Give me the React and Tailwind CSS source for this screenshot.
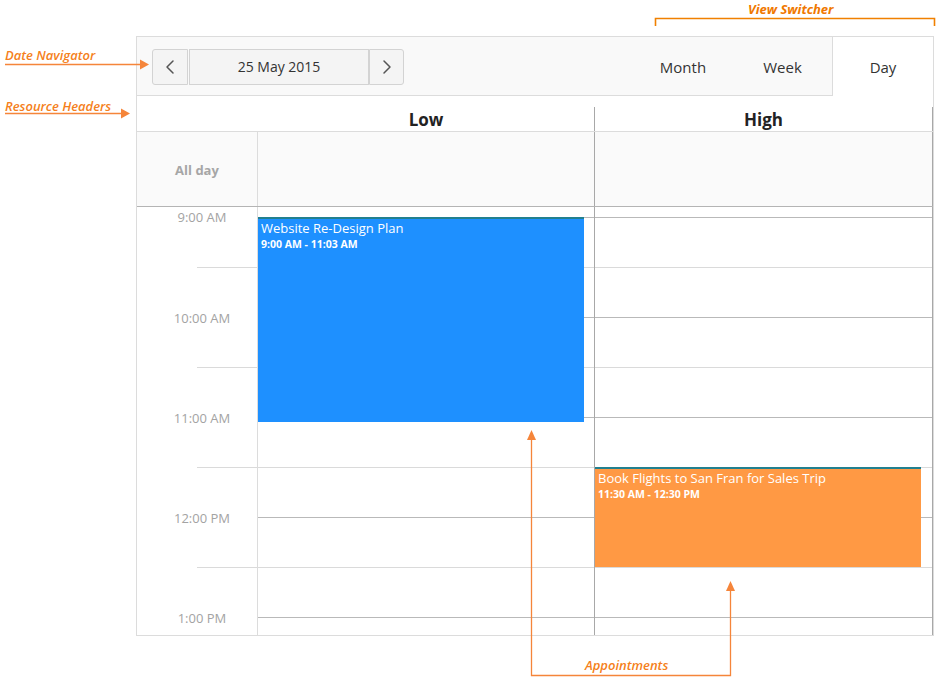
import React from 'react';
import { ChevronLeft, ChevronRight } from 'lucide-react';

const hours = [
  { label: '9:00 AM', cls: 'h-[61px] pt-[1px]', line: true },
  { label: '10:00 AM', cls: 'h-[100px] items-center', line: true },
  { label: '11:00 AM', cls: 'h-[100px] items-center', line: true },
  { label: '12:00 PM', cls: 'h-[100px] items-center', line: true },
  { label: '1:00 PM', cls: 'h-[67px] pt-[41px]', line: false },
];

// slot lines: D = hour line, L = half hour line
const slots = ['D', 'L', 'D', 'L', 'D', 'L', 'D', 'L', 'D'];

const appointments = {
  Low: [
    { title: 'Website Re-Design Plan', time: '9:00 AM - 11:03 AM', top: 'top-[10px]', height: 'h-[205px]', bg: 'bg-[#1e90ff]' },
  ],
  High: [
    { title: 'Book Flights to San Fran for Sales Trip', time: '11:30 AM - 12:30 PM', top: 'top-[260px]', height: 'h-[100px]', bg: 'bg-[#ff9944]' },
  ],
};

const SlotColumn = ({ name, width }) => (
  <div className={`relative ${width} border-r border-[#a8a8a8]`}>
    <div className="h-[11px] border-b border-[#b9b9b9]" />
    {slots.slice(1).map((kind, i) => (
      <div
        key={i}
        className={`h-[50px] border-b ${kind === 'D' ? 'border-[#b9b9b9]' : 'border-[#dadada]'}`}
      />
    ))}
    <div className="h-[17px]" />
    {(appointments[name] || []).map((a) => (
      <div
        key={a.title}
        className={`absolute left-0 w-[326px] ${a.top} ${a.height} ${a.bg} border-t-2 border-[#22808f] px-[3px] text-white`}
      >
        <div className="text-[13px] leading-[18px]">{a.title}</div>
        <div className="text-[10.5px] font-bold leading-[14px]">{a.time}</div>
      </div>
    ))}
  </div>
);

const Annotations = () => (
  <>
    <svg className="pointer-events-none absolute left-0 top-0" width="940" height="684">
      {/* date navigator */}
      <line x1="5" y1="64.5" x2="142" y2="64.5" stroke="#f5853a" strokeWidth="1.3" />
      <polygon points="140,59.5 149,64.5 140,69.5" fill="#f5853a" />
      {/* resource headers */}
      <line x1="5" y1="113.5" x2="122" y2="113.5" stroke="#f5853a" strokeWidth="1.3" />
      <polygon points="121,108.5 130,113.5 121,118.5" fill="#f5853a" />
      {/* view switcher */}
      <polyline points="655.5,26 655.5,18.5 934.5,18.5 934.5,26" fill="none" stroke="#f08000" strokeWidth="1.6" />
      {/* appointments */}
      <polyline points="531.5,438 531.5,675.5 730.5,675.5 730.5,589" fill="none" stroke="#f5853a" strokeWidth="1.3" />
      <polygon points="527,440 531.5,430 536,440" fill="#f5853a" />
      <polygon points="726,591 730.5,581 735,591" fill="#f5853a" />
    </svg>
    <span className="absolute left-[5px] top-[47px] text-[13px] font-semibold italic leading-[17px] text-[#f57f20]">Date Navigator</span>
    <span className="absolute left-[5px] top-[98px] text-[13px] font-semibold italic leading-[17px] text-[#f57f20]">Resource Headers</span>
    <span className="absolute left-[748px] top-[1px] text-[13px] font-bold italic leading-[17px] text-[#f07800]">View Switcher</span>
    <span className="absolute left-[585px] top-[657px] text-[13px] font-semibold italic leading-[17px] text-[#f57f20]">Appointments</span>
  </>
);

export default function App() {
  return (
    <div
      className="relative h-[684px] w-[940px] overflow-hidden bg-white text-[#333]"
      style={{ fontFamily: '"Open Sans", "Noto Sans", sans-serif' }}
    >
      <div className="ml-[136px] mt-[36px] w-[798px] border border-[#dcdcdc]">
        {/* toolbar */}
        <div className="flex h-[59px]">
          <div className="flex flex-1 items-center border-b border-[#dcdcdc] bg-[#f9f9f9] pl-[15px] pt-px">
            <div className="flex h-[36px]">
              <button className="flex w-[36px] items-center justify-center rounded-l-[3px] border border-[#d3d3d3] bg-[#f4f4f4] text-[#555]">
                <ChevronLeft size={24} strokeWidth={1.5} />
              </button>
              <div className="ml-px flex w-[180px] items-center justify-center border border-[#d3d3d3] bg-[#f4f4f4] text-[14px]">
                25 May 2015
              </div>
              <button className="flex w-[35px] items-center justify-center rounded-r-[3px] border border-[#d3d3d3] bg-[#f4f4f4] text-[#555]">
                <ChevronRight size={24} strokeWidth={1.5} />
              </button>
            </div>
            <div className="ml-auto flex h-full pt-[2px] text-[15px]">
              <div className="flex w-[100px] items-center justify-center">Month</div>
              <div className="flex w-[99px] items-center justify-center">Week</div>
            </div>
          </div>
          <div className="flex w-[101px] items-center justify-center border-l border-[#dcdcdc] bg-white pt-[2px] text-[15px]">
            Day
          </div>
        </div>

        {/* resource headers */}
        <div className="flex h-[36px] border-b border-[#dcdcdc]">
          <div className="w-[121px]" />
          <div className="flex w-[337px]">
            <div className="flex flex-1 items-center justify-center pt-[12px] text-[17px] font-bold text-[#222]">Low</div>
            <div className="mt-[11px] w-px bg-[#a8a8a8]" />
          </div>
          <div className="flex w-[338px]">
            <div className="flex flex-1 items-center justify-center pt-[12px] text-[17px] font-bold text-[#222]">High</div>
            <div className="mt-[11px] w-px bg-[#a8a8a8]" />
          </div>
        </div>

        {/* all day */}
        <div className="flex h-[75px] border-b border-[#b4b4b4] bg-[#fafafa]">
          <div className="flex w-[121px] items-center justify-center border-r border-[#dcdcdc] pt-[3px] text-[13px] font-bold text-[#a6a6a6]">
            All day
          </div>
          <div className="w-[337px] border-r border-[#a8a8a8]" />
          <div className="w-[338px] border-r border-[#a8a8a8]" />
        </div>

        {/* time grid */}
        <div className="flex h-[428px]">
          <div className="w-[121px] border-r border-[#dcdcdc]">
            {hours.map((h) => (
              <div key={h.label} className="flex flex-col">
                <div className={`flex ${h.cls} justify-center pl-[10px] text-[13px] leading-[18px] text-[#a3a3a3]`}>
                  {h.label}
                </div>
                {h.line && <div className="-mt-px ml-[60px] h-px bg-[#dadada]" />}
              </div>
            ))}
          </div>
          <SlotColumn name="Low" width="w-[337px]" />
          <SlotColumn name="High" width="w-[338px]" />
        </div>
      </div>
      <Annotations />
    </div>
  );
}
